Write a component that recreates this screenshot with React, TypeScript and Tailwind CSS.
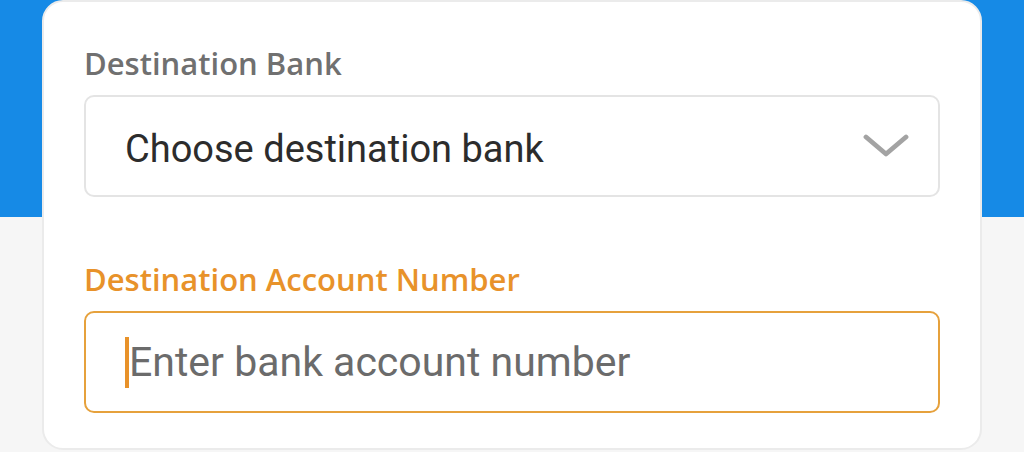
import { useState } from "react";

const LABEL_FONT = { fontFamily: '"Open Sans", "Liberation Sans", sans-serif' };
const FIELD_FONT = { fontFamily: 'Roboto, "Liberation Sans", sans-serif' };

function Chevron() {
  return (
    <svg width="46" height="24" viewBox="0 0 46 24" fill="none" className="shrink-0">
      <polyline
        points="3,3 23,20 43,3"
        stroke="#a3a3a3"
        strokeWidth="4.8"
        strokeLinecap="round"
        strokeLinejoin="round"
      />
    </svg>
  );
}

export default function App() {
  const [bank] = useState("");

  return (
    <div className="relative h-[452px] w-full overflow-hidden bg-[#f6f6f6]">
      {/* blue header band behind the card */}
      <div className="absolute inset-x-0 top-0 h-[217px] bg-[#168ae6]" />

      <div className="relative z-10 mx-auto w-[940px] rounded-[21px] border-2 border-[#ebebeb] bg-white px-[40px] pt-[43px] pb-[35px]">
        <label
          className="block text-[31px] leading-[36px] font-semibold text-[#707070]"
          style={LABEL_FONT}
        >
          Destination Bank
        </label>

        <div className="mt-[14px] flex h-[102px] items-center justify-between rounded-[10px] border-2 border-[#e4e4e4] pt-[6px] pl-[39px] pr-[29px]">
          <span className="text-[38px] leading-none text-[#2c2c2c]" style={FIELD_FONT}>
            {bank || "Choose destination bank"}
          </span>
          <div className="-mt-[6px]">
            <Chevron />
          </div>
        </div>

        <label
          className="mt-[64px] block text-[31px] leading-[36px] font-semibold text-[#e8922a]"
          style={LABEL_FONT}
        >
          Destination Account Number
        </label>

        <div className="mt-[14px] flex h-[102px] items-center rounded-[10px] border-2 border-[#e6a13c] pl-[39px]">
          <span className="mr-[0px] h-[51px] w-[4px] bg-[#e8922a]" />
          <span className="text-[41px] leading-none text-[#6b6b6b]" style={FIELD_FONT}>
            Enter bank account number
          </span>
        </div>
      </div>
    </div>
  );
}
